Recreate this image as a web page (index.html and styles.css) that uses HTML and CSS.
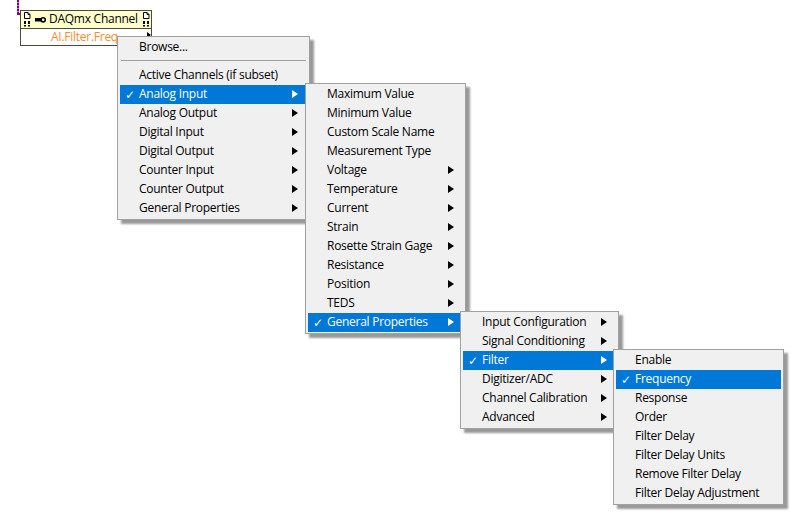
FILE: index.html
```html
<!DOCTYPE html>
<html lang="en">
<head>
    <meta charset="UTF-8">
    <title>DAQmx Channel Property Node</title>
    <link rel="stylesheet" href="styles.css">
</head>
<body>
    <div class="wire"></div>

    <!-- Property node -->
    <div class="node">
        <div class="node-head">
            <svg class="doc-icon" width="7" height="15" viewBox="0 0 7 15"><path d="M.5 .5H4L6 2.500V6.500H.5Z" fill="#fff" stroke="#000"/><path d="M4 .5V2.500H6" fill="none" stroke="#000"/><path d="M0 9h2v3H0zM4 9h2v3H4zM0 13h2v1.500H0zM4 13h2v1.500H4z" fill="#000"/></svg>
            <svg class="ref-icon" width="11" height="8" viewBox="0 0 11 8"><path d="M0 2h6.500v3.500H0z" fill="#000"/><circle cx="8.200" cy="3.800" r="2.100" fill="#ffffcc" stroke="#000" stroke-width="1.600"/></svg>
            <span class="node-title">DAQmx Channel</span>
            <svg class="doc-icon" width="7" height="15" viewBox="0 0 7 15"><path d="M.5 .5H4L6 2.500V6.500H.5Z" fill="#fff" stroke="#000"/><path d="M4 .5V2.500H6" fill="none" stroke="#000"/><path d="M0 9h2v3H0zM4 9h2v3H4zM0 13h2v1.500H0zM4 13h2v1.500H4z" fill="#000"/></svg>
        </div>
        <div class="node-prop">AI.Filter.Freq</div>
        <div class="node-arrow"></div>
    </div>

    <!-- Top level menu -->
    <div class="menu menu-1">
        <div class="item">Browse...</div>
        <div class="sep"></div>
        <div class="item">Active Channels (if subset)</div>
        <div class="item active sub">Analog Input</div>
        <div class="item sub">Analog Output</div>
        <div class="item sub">Digital Input</div>
        <div class="item sub">Digital Output</div>
        <div class="item sub">Counter Input</div>
        <div class="item sub">Counter Output</div>
        <div class="item sub">General Properties</div>
    </div>

    <div class="menu menu-2">
        <div class="item">Maximum Value</div>
        <div class="item">Minimum Value</div>
        <div class="item">Custom Scale Name</div>
        <div class="item">Measurement Type</div>
        <div class="item sub">Voltage</div>
        <div class="item sub">Temperature</div>
        <div class="item sub">Current</div>
        <div class="item sub">Strain</div>
        <div class="item sub">Rosette Strain Gage</div>
        <div class="item sub">Resistance</div>
        <div class="item sub">Position</div>
        <div class="item sub">TEDS</div>
        <div class="item active sub">General Properties</div>
    </div>

    <div class="menu menu-3">
        <div class="item sub">Input Configuration</div>
        <div class="item sub">Signal Conditioning</div>
        <div class="item active sub">Filter</div>
        <div class="item sub">Digitizer/ADC</div>
        <div class="item sub">Channel Calibration</div>
        <div class="item sub">Advanced</div>
    </div>

    <div class="menu menu-4">
        <div class="item">Enable</div>
        <div class="item active">Frequency</div>
        <div class="item">Response</div>
        <div class="item">Order</div>
        <div class="item">Filter Delay</div>
        <div class="item">Filter Delay Units</div>
        <div class="item">Remove Filter Delay</div>
        <div class="item">Filter Delay Adjustment</div>
    </div>
</body>
</html>
```

FILE: styles.css
```css
body {
    margin: 0;
    background-color: white;
    font-family: "Open Sans", "Noto Sans", sans-serif;
    font-size: 12px;
    letter-spacing: -0.26px;
    color: #000;
}

/* Block diagram bits */
.wire {
    position: absolute;
    left: 17px;
    top: 0;
    width: 3px;
    height: 13px;
    background: repeating-linear-gradient(to bottom, #800080 0 2px, #c080c0 2px 3px) left / 2px 100% no-repeat;
    border-bottom: 2px solid #800080;
}
.node {
    position: absolute;
    left: 20px;
    top: 10px;
    width: 130px;
    height: 34px;
    border: 1px solid #4a4a3c;
    background-color: white;
}
.node-head {
    display: flex;
    align-items: center;
    height: 17px;
    background-color: #ffffcc;
    border-bottom: 1px solid #4a4a3c;
    padding-left: 3px;
}
.ref-icon {
    margin-left: 4px;
    margin-right: 3px;
}
.node-title {
    width: 92px;
    margin-right: 2px;
    padding-bottom: 2px;
    white-space: nowrap;
}
.node-prop {
    color: #ff8c28;
    padding-left: 30px;
    line-height: 16px;
    white-space: nowrap;
}
.node-arrow {
    position: absolute;
    right: 0;
    top: 21px;
    border-left: 4px solid #000;
    border-top: 3px solid transparent;
    border-bottom: 3px solid transparent;
}

/* Cascading menus */
.menu {
    position: absolute;
    box-sizing: border-box;
    padding: 1px 2px;
    background-color: #f0f0f0;
    border: 1px solid #a0a0a0;
    box-shadow: 4px 4px 2px rgba(0, 0, 0, 0.4);
}
.menu-1 { left: 117px; top: 36px; width: 193px; }
.menu-2 { left: 305px; top: 83px; width: 161px; }
.menu-3 { left: 460px; top: 311px; width: 159px; }
.menu-4 { left: 613px; top: 349px; width: 171px; }

.item {
    position: relative;
    height: 19px;
    line-height: 17px;
    padding-left: 19px;
    white-space: nowrap;
}
.item.active {
    background-color: #0078d7;
    color: white;
}
.item.active::before {
    content: "\2713";
    position: absolute;
    left: 5px;
    top: 2px;
    font-family: "DejaVu Sans", sans-serif;
    font-size: 12px;
}
.item.sub::after {
    content: "";
    position: absolute;
    right: 9px;
    top: 5px;
    border-left: 6px solid #000;
    border-top: 4.500px solid transparent;
    border-bottom: 4.500px solid transparent;
}
.item.active.sub::after {
    border-left-color: white;
}
.sep {
    height: 1px;
    margin: 3px 1px 5px;
    background-color: #a0a0a0;
}
```
